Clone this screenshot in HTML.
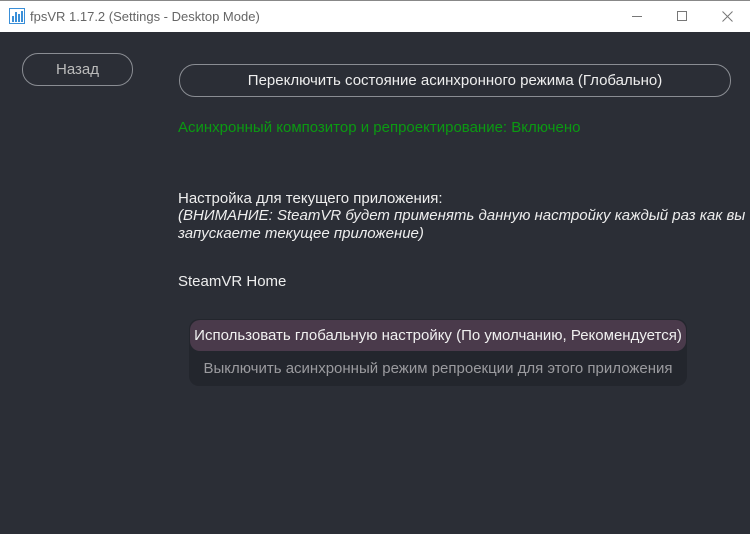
<!DOCTYPE html>
<html><head><meta charset="utf-8"><style>
*{margin:0;padding:0;box-sizing:border-box}
body{width:750px;height:534px;overflow:hidden;background:#2b2e36;font-family:"Liberation Sans",sans-serif;position:relative}
.tb{position:absolute;left:0;top:0;width:750px;height:32px;background:#fff;border-top:1px solid #888}
.tb .t{position:absolute;left:30px;top:8px;font-size:13px;color:#666}
.pill{position:absolute;border:1px solid #8a8d93;border-radius:16px;color:#ddd;text-align:center;white-space:nowrap}
.txt{position:absolute;font-size:15px;color:#eee;white-space:nowrap}
</style></head><body>
<div class="tb">
<svg style="position:absolute;left:9px;top:7px" width="16" height="16" viewBox="0 0 16 16"><rect x="0.5" y="0.5" width="15" height="15" fill="#fff" stroke="#3a8fd8"/><rect x="3" y="8" width="2" height="6" fill="#3a8fd8"/><rect x="6" y="4" width="2" height="10" fill="#3a8fd8"/><rect x="9" y="6" width="2" height="8" fill="#3a8fd8"/><rect x="12" y="3" width="2" height="11" fill="#3a8fd8"/></svg>
<div class="t">fpsVR 1.17.2 (Settings - Desktop Mode)</div>
<div style="position:absolute;left:632px;top:15px;width:10px;height:1px;background:#777"></div>
<div style="position:absolute;left:677px;top:10px;width:10px;height:10px;border:1px solid #777"></div>
<svg style="position:absolute;left:722px;top:10px" width="11" height="11"><path d="M0.5 0.5L10.5 10.5M10.5 0.5L0.5 10.5" stroke="#777" stroke-width="1"/></svg>
</div>
<div class="pill" style="left:22px;top:53px;width:111px;height:33px;line-height:31px;font-size:15px;color:#bbb">Назад</div>
<div class="pill" style="left:179px;top:64px;width:552px;height:33px;line-height:31px;font-size:15px;color:#eee">Переключить состояние асинхронного режима (Глобально)</div>
<div class="txt" style="left:178px;top:119px;color:#0b9a12">Асинхронный композитор и репроектирование: Включено</div>
<div class="txt" style="left:178px;top:190px">Настройка для текущего приложения:</div>
<div class="txt" style="left:178px;top:207px;font-style:italic;line-height:18px">(ВНИМАНИЕ: SteamVR будет применять данную настройку каждый раз как вы<br>запускаете текущее приложение)</div>
<div class="txt" style="left:178px;top:273px">SteamVR Home</div>
<div style="position:absolute;left:189px;top:319px;width:498px;height:67px;background:#23262d;border-radius:10px"></div>
<div style="position:absolute;left:190px;top:320px;width:496px;height:31px;background:#4a3a4b;border-radius:10px;color:#f0f0f0;font-size:15px;line-height:31px;text-align:center;white-space:nowrap">Использовать глобальную настройку (По умолчанию, Рекомендуется)</div>
<div style="position:absolute;left:190px;top:354px;width:496px;height:30px;color:#9b9b9f;font-size:15px;line-height:30px;text-align:center;white-space:nowrap">Выключить асинхронный режим репроекции для этого приложения</div>
</body></html>
